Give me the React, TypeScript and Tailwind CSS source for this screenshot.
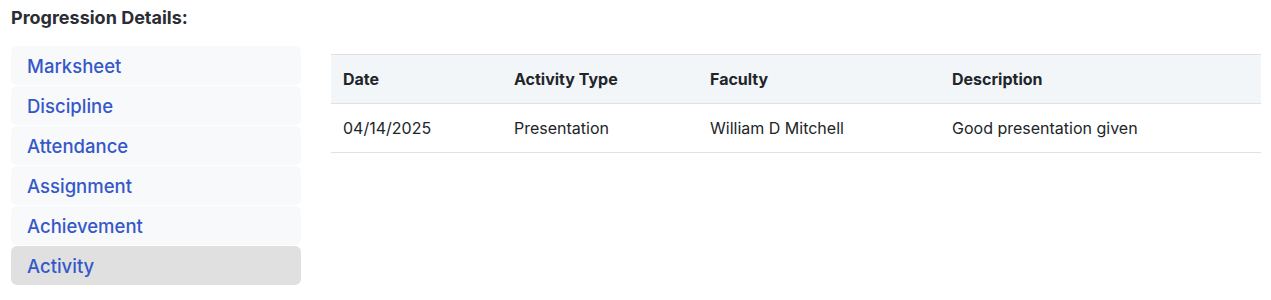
const tabs = ['Marksheet', 'Discipline', 'Attendance', 'Assignment', 'Achievement', 'Activity']

const rows = [
  { date: '04/14/2025', type: 'Presentation', faculty: 'William D Mitchell', description: 'Good presentation given' },
]

export default function App() {
  const active = 'Activity'

  return (
    <div className="bg-white w-[1271px] h-[300px] font-['Inter',sans-serif] text-[#212529]">
      <div className="pt-[7px] pl-[11px] text-[18px] font-bold text-[#2a2d34] leading-[22px]">
        Progression Details:
      </div>

      <div className="flex mt-[17px] pl-[11px] pr-[10px]">
        {/* Side tabs */}
        <div className="w-[290px] flex flex-col gap-px shrink-0">
          {tabs.map((t) => (
            <div
              key={t}
              className={
                'h-[39px] flex items-center pl-[16px] pt-[3px] rounded-[6px] text-[18.5px] font-medium text-[#3558c8] ' +
                (t === active ? 'bg-[#e0e0e0]' : 'bg-[#f8f9fb]')
              }
            >
              {t}
            </div>
          ))}
        </div>

        {/* Table */}
        <div className="ml-[30px] mt-[8px] flex-1">
          <table className="w-full border-collapse text-[16px]">
            <thead>
              <tr className="bg-[#f3f6f9] border-y border-[#dee2e6]">
                <th className="w-[171px] h-[49px] text-left font-bold px-[12px]">Date</th>
                <th className="w-[196px] text-left font-bold px-[12px]">Activity Type</th>
                <th className="w-[242px] text-left font-bold px-[12px]">Faculty</th>
                <th className="text-left font-bold px-[12px]">Description</th>
              </tr>
            </thead>
            <tbody>
              {rows.map((r) => (
                <tr key={r.date} className="border-b border-[#dee2e6]">
                  <td className="h-[49px] px-[12px]">{r.date}</td>
                  <td className="px-[12px]">{r.type}</td>
                  <td className="px-[12px]">{r.faculty}</td>
                  <td className="px-[12px]">{r.description}</td>
                </tr>
              ))}
            </tbody>
          </table>
        </div>
      </div>
    </div>
  )
}
